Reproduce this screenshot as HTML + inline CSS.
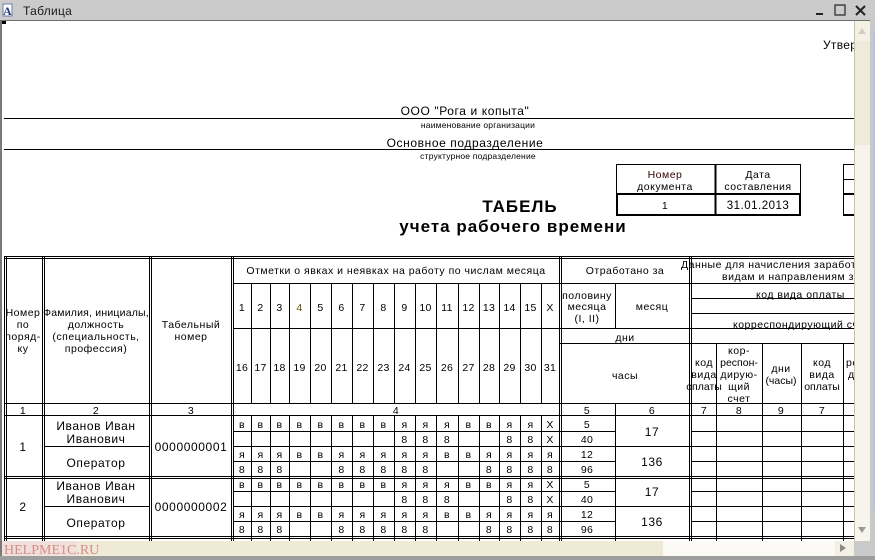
<!DOCTYPE html>
<html><head><meta charset="utf-8"><style>
html,body{margin:0;padding:0;width:875px;height:560px;overflow:hidden;background:#c9c9c9}
svg{display:block}
text{font-family:"Liberation Sans","DejaVu Sans",sans-serif;font-size:10.5px;fill:#000;letter-spacing:0.3px}
.c{text-anchor:middle}
.s{font-size:8.5px;letter-spacing:0.2px}
.b{font-weight:bold;font-size:17px;letter-spacing:1px}
.h{font-size:10.5px;letter-spacing:0.5px}
.p{font-size:12px;letter-spacing:0.6px}
</style></head><body>
<svg width="875" height="560" viewBox="0 0 875 560" xmlns="http://www.w3.org/2000/svg">
<rect x="0" y="0" width="875" height="21" fill="#cbcbcb"/>
<rect x="3" y="4" width="9" height="12" fill="#fff" stroke="#6a7fa8" stroke-width="1"/>
<text x="3" y="15" style="font-size:12px;font-family:'Liberation Serif',serif;fill:#2a3f80;font-weight:bold">A</text>
<text x="23" y="15" style="font-size:12px;fill:#1a1a1a">Таблица</text>
<rect x="816" y="13" width="7" height="2" fill="#222"/>
<rect x="835" y="5" width="10" height="10" fill="none" stroke="#222" stroke-width="1.2"/>
<path d="M856 6 L865 15 M865 6 L856 15" stroke="#222" stroke-width="2"/>
<rect x="1" y="20" width="854" height="521" fill="#fff"/>
<rect x="0" y="20" width="2" height="540" fill="#7a7a7a"/>
<rect x="0" y="20" width="875" height="1" fill="#6f6f6f"/>
<rect x="2" y="21" width="4" height="3" fill="#000"/>
<rect x="2" y="541" width="852" height="15" fill="#fbfaf6"/>
<rect x="2" y="541" width="661" height="15" fill="#efead6"/>
<rect x="835" y="541" width="19" height="15" fill="#f3f1e6"/>
<path d="M840 544 L846 548 L840 552 Z" fill="#8a8a8a"/>
<rect x="2" y="541" width="75" height="15" fill="#f0e0dc"/>
<text x="4" y="554" style="font-family:'Liberation Serif',serif;font-size:14px;fill:#d88a86;letter-spacing:0">HELPME1C.RU</text>
<rect x="0" y="556" width="875" height="4" fill="#9d9d9d"/>

<text x="823" y="49" style="font-size:12px">Утвер</text>
<line x1="4" y1="118.5" x2="855" y2="118.5" stroke="#000"/>
<text class="c p" x="465" y="115">ООО "Рога и копыта"</text>
<text class="c s" x="478" y="128">наименование организации</text>
<line x1="4" y1="149.5" x2="855" y2="149.5" stroke="#000"/>
<text class="c p" x="465" y="147">Основное подразделение</text>
<text class="c s" x="478" y="159">структурное подразделение</text>

<rect x="616.5" y="164.5" width="184" height="51" fill="none" stroke="#000"/>
<rect x="617" y="194" width="183" height="21" fill="none" stroke="#000" stroke-width="2"/>
<line x1="715.5" y1="164" x2="715.5" y2="216" stroke="#000" stroke-width="2"/>
<g class="h">
<text class="c h" x="665" y="178" style="fill:#300">Номер</text>
<text class="c h" x="665" y="190">документа</text>
<text class="c h" x="758" y="178">Дата</text>
<text class="c h" x="758" y="190">составления</text>
<text class="c h" x="665" y="209">1</text>
<text class="c h" x="758" y="209" style="font-size:11.5px">31.01.2013</text>
</g>
<path d="M843.5 164.5 H855 M843.5 179.5 H855 M843.5 164 V216" stroke="#000" fill="none"/>
<path d="M844 194 H855 M844 215 H855" stroke="#000" stroke-width="2"/>
<text class="c b" x="520" y="212">ТАБЕЛЬ</text>
<text class="c b" x="513" y="232">учета  рабочего времени</text>

<g stroke="#000" stroke-width="1" fill="none">
<path d="M4 256.5 H855 M4 258.5 H855"/>
<path d="M233 283.5 H855"/>
<path d="M692 298.5 H855 M692 313.5 H855"/>
<path d="M233 328.5 H855"/>
<path d="M560 343.5 H855"/>
<path d="M4 403.5 H855 M4 415.5 H855"/>
<path d="M233 431.5 H615 M692 431.5 H855 M44 446.5 H149 M233 446.5 H855 M233 461.5 H615 M692 461.5 H855"/>
<path d="M4 476.5 H855 M4 478.5 H855"/>
<path d="M233 491.5 H615 M692 491.5 H855 M44 506.5 H149 M233 506.5 H855 M233 521.5 H615 M692 521.5 H855"/>
<path d="M4 536.5 H855 M4 538.5 H855"/>
<path d="M4.5 256 V541 M6.5 256 V541 M42.5 256 V541 M44.5 256 V541 M149.5 256 V541 M151.5 256 V541 M231.5 256 V541 M233.5 256 V541"/>
<path d="M559.5 256 V541 M561.5 256 V541 M689.5 256 V541 M691.5 256 V541"/>
<path d="M251.5 283V403M270.5 283V403M289.5 283V403M310.5 283V403M331.5 283V403M352.5 283V403M373.5 283V403M394.5 283V403M415.5 283V403M436.5 283V403M458.5 283V403M479.5 283V403M499.5 283V403M520.5 283V403M541.5 283V403"/>
<path d="M251.5 416V541M270.5 416V541M289.5 416V541M310.5 416V541M331.5 416V541M352.5 416V541M373.5 416V541M394.5 416V541M415.5 416V541M436.5 416V541M458.5 416V541M479.5 416V541M499.5 416V541M520.5 416V541M541.5 416V541"/>
<path d="M615.5 283 V328 M615.5 403 V541"/>
<path d="M716.5 343V541 M762.5 343V541 M801.5 343V541 M843.5 343V541"/>
</g>

<g>
<text class="c h" x="23" y="316">Номер</text>
<text class="c h" x="23" y="328">по</text>
<text class="c h" x="23" y="340">поряд-</text>
<text class="c h" x="23" y="352">ку</text>
<text class="c h" x="96" y="316" style="letter-spacing:0.2px">Фамилия, инициалы,</text>
<text class="c h" x="96" y="328">должность</text>
<text class="c h" x="96" y="340">(специальность,</text>
<text class="c h" x="96" y="352">профессия)</text>
<text class="c h" x="191" y="328">Табельный</text>
<text class="c h" x="191" y="340">номер</text>
<text class="c h" x="396" y="274">Отметки о явках и неявках на работу по числам месяца</text>
<text class="c h" x="625" y="274">Отработано за</text>
<text class="c h" x="587" y="299">половину</text>
<text class="c h" x="587" y="310">месяца</text>
<text class="c h" x="587" y="322">(I, II)</text>
<text class="c h" x="652" y="310">месяц</text>
<text class="c h" x="625" y="341">дни</text>
<text class="c h" x="625" y="379">часы</text>
<text class="h" x="681" y="268">Данные для начисления заработно</text>
<text class="h" x="722" y="280">видам и направлениям за</text>
<text class="h" x="756" y="298">код вида оплаты</text>
<text class="h" x="733" y="328">корреспондирующий сч</text>
<text class="c h" x="704" y="366">код</text>
<text class="c h" x="704" y="378">вида</text>
<text class="c h" x="704" y="390" style="letter-spacing:0">оплаты</text>
<text class="c h" x="739" y="354">кор-</text>
<text class="c h" x="739" y="366" style="letter-spacing:0">респон-</text>
<text class="c h" x="739" y="378">дирую-</text>
<text class="c h" x="739" y="390">щий</text>
<text class="c h" x="739" y="402">счет</text>
<text class="c h" x="781" y="372">дни</text>
<text class="c h" x="781" y="384" style="letter-spacing:0">(часы)</text>
<text class="c h" x="822" y="366">код</text>
<text class="c h" x="822" y="378">вида</text>
<text class="c h" x="822" y="390" style="letter-spacing:0">оплаты</text>
<text class="h" x="846" y="366">ре</text>
<text class="h" x="848" y="378">д</text>
</g>
<g style="font-size:11px">
<text class="c" x="242" y="311">1</text><text class="c" x="260.5" y="311">2</text><text class="c" x="279.5" y="311">3</text><text class="c" x="299.5" y="311" style="fill:#6a4a00">4</text><text class="c" x="320.5" y="311">5</text><text class="c" x="341.5" y="311">6</text><text class="c" x="362.5" y="311">7</text><text class="c" x="383.5" y="311">8</text><text class="c" x="404.5" y="311">9</text><text class="c" x="425.5" y="311">10</text><text class="c" x="447" y="311">11</text><text class="c" x="468.5" y="311">12</text><text class="c" x="489" y="311">13</text><text class="c" x="509.5" y="311">14</text><text class="c" x="530.5" y="311">15</text><text class="c" x="550" y="311">X</text>
<text class="c" x="242" y="371">16</text><text class="c" x="260.5" y="371">17</text><text class="c" x="279.5" y="371">18</text><text class="c" x="299.5" y="371">19</text><text class="c" x="320.5" y="371">20</text><text class="c" x="341.5" y="371">21</text><text class="c" x="362.5" y="371">22</text><text class="c" x="383.5" y="371">23</text><text class="c" x="404.5" y="371">24</text><text class="c" x="425.5" y="371">25</text><text class="c" x="447" y="371">26</text><text class="c" x="468.5" y="371">27</text><text class="c" x="489" y="371">28</text><text class="c" x="509.5" y="371">29</text><text class="c" x="530.5" y="371">30</text><text class="c" x="550" y="371">31</text>
</g>
<g style="font-size:10.5px">
<text class="c" x="23" y="414">1</text><text class="c" x="96" y="414">2</text><text class="c" x="191" y="414">3</text><text class="c" x="396" y="414">4</text>
<text class="c" x="587" y="414">5</text><text class="c" x="652" y="414">6</text><text class="c" x="704" y="414">7</text><text class="c" x="739" y="414">8</text><text class="c" x="781" y="414">9</text><text class="c" x="822" y="414">7</text>
</g>

<g>
<text class="c p" x="23" y="451">1</text>
<text class="c p" x="96" y="430">Иванов Иван</text>
<text class="c p" x="96" y="443">Иванович</text>
<text class="c p" x="96" y="467">Оператор</text>
<text class="c p" x="191" y="451">0000000001</text>
<text class="c p" x="652" y="436">17</text>
<text class="c p" x="652" y="466">136</text>
<text class="c p" x="23" y="511">2</text>
<text class="c p" x="96" y="490">Иванов Иван</text>
<text class="c p" x="96" y="503">Иванович</text>
<text class="c p" x="96" y="527">Оператор</text>
<text class="c p" x="191" y="511">0000000002</text>
<text class="c p" x="652" y="496">17</text>
<text class="c p" x="652" y="526">136</text>
</g>
<g style="font-size:11.5px">
<text class="c" x="587" y="428">5</text><text class="c" x="587" y="443">40</text><text class="c" x="587" y="458">12</text><text class="c" x="587" y="473">96</text>
<text class="c" x="587" y="488">5</text><text class="c" x="587" y="503">40</text><text class="c" x="587" y="518">12</text><text class="c" x="587" y="533">96</text>
</g>
<g style="font-size:11px">
<text class="c" x="242" y="428">в</text><text class="c" x="260.5" y="428">в</text><text class="c" x="279.5" y="428">в</text><text class="c" x="299.5" y="428">в</text><text class="c" x="320.5" y="428">в</text><text class="c" x="341.5" y="428">в</text><text class="c" x="362.5" y="428">в</text><text class="c" x="383.5" y="428">в</text><text class="c" x="404.5" y="428">я</text><text class="c" x="425.5" y="428">я</text><text class="c" x="447" y="428">я</text><text class="c" x="468.5" y="428">в</text><text class="c" x="489" y="428">в</text><text class="c" x="509.5" y="428">я</text><text class="c" x="530.5" y="428">я</text><text class="c" x="550" y="428">X</text>
<text class="c" x="404.5" y="443">8</text><text class="c" x="425.5" y="443">8</text><text class="c" x="447" y="443">8</text><text class="c" x="509.5" y="443">8</text><text class="c" x="530.5" y="443">8</text><text class="c" x="550" y="443">X</text>
<text class="c" x="242" y="458">я</text><text class="c" x="260.5" y="458">я</text><text class="c" x="279.5" y="458">я</text><text class="c" x="299.5" y="458">в</text><text class="c" x="320.5" y="458">в</text><text class="c" x="341.5" y="458">я</text><text class="c" x="362.5" y="458">я</text><text class="c" x="383.5" y="458">я</text><text class="c" x="404.5" y="458">я</text><text class="c" x="425.5" y="458">я</text><text class="c" x="447" y="458">в</text><text class="c" x="468.5" y="458">в</text><text class="c" x="489" y="458">я</text><text class="c" x="509.5" y="458">я</text><text class="c" x="530.5" y="458">я</text><text class="c" x="550" y="458">я</text>
<text class="c" x="242" y="473">8</text><text class="c" x="260.5" y="473">8</text><text class="c" x="279.5" y="473">8</text><text class="c" x="341.5" y="473">8</text><text class="c" x="362.5" y="473">8</text><text class="c" x="383.5" y="473">8</text><text class="c" x="404.5" y="473">8</text><text class="c" x="425.5" y="473">8</text><text class="c" x="489" y="473">8</text><text class="c" x="509.5" y="473">8</text><text class="c" x="530.5" y="473">8</text><text class="c" x="550" y="473">8</text>
<text class="c" x="242" y="488">в</text><text class="c" x="260.5" y="488">в</text><text class="c" x="279.5" y="488">в</text><text class="c" x="299.5" y="488">в</text><text class="c" x="320.5" y="488">в</text><text class="c" x="341.5" y="488">в</text><text class="c" x="362.5" y="488">в</text><text class="c" x="383.5" y="488">в</text><text class="c" x="404.5" y="488">я</text><text class="c" x="425.5" y="488">я</text><text class="c" x="447" y="488">я</text><text class="c" x="468.5" y="488">в</text><text class="c" x="489" y="488">в</text><text class="c" x="509.5" y="488">я</text><text class="c" x="530.5" y="488">я</text><text class="c" x="550" y="488">X</text>
<text class="c" x="404.5" y="503">8</text><text class="c" x="425.5" y="503">8</text><text class="c" x="447" y="503">8</text><text class="c" x="509.5" y="503">8</text><text class="c" x="530.5" y="503">8</text><text class="c" x="550" y="503">X</text>
<text class="c" x="242" y="518">я</text><text class="c" x="260.5" y="518">я</text><text class="c" x="279.5" y="518">я</text><text class="c" x="299.5" y="518">в</text><text class="c" x="320.5" y="518">в</text><text class="c" x="341.5" y="518">я</text><text class="c" x="362.5" y="518">я</text><text class="c" x="383.5" y="518">я</text><text class="c" x="404.5" y="518">я</text><text class="c" x="425.5" y="518">я</text><text class="c" x="447" y="518">в</text><text class="c" x="468.5" y="518">в</text><text class="c" x="489" y="518">я</text><text class="c" x="509.5" y="518">я</text><text class="c" x="530.5" y="518">я</text><text class="c" x="550" y="518">я</text>
<text class="c" x="242" y="533">8</text><text class="c" x="260.5" y="533">8</text><text class="c" x="279.5" y="533">8</text><text class="c" x="341.5" y="533">8</text><text class="c" x="362.5" y="533">8</text><text class="c" x="383.5" y="533">8</text><text class="c" x="404.5" y="533">8</text><text class="c" x="425.5" y="533">8</text><text class="c" x="489" y="533">8</text><text class="c" x="509.5" y="533">8</text><text class="c" x="530.5" y="533">8</text><text class="c" x="550" y="533">8</text>
</g>
<rect x="855" y="21" width="15" height="520" fill="#f6f4ec"/>
<rect x="854" y="21" width="1" height="520" fill="#c8c3a8"/>
<rect x="855" y="21" width="15" height="20" fill="#f3f1e6"/>
<path d="M858 34 L862 28 L866 34 Z" fill="#d0cdc0"/>
<rect x="855" y="41" width="15" height="104" fill="#efebda"/>
<path d="M858 527 L866 527 L862 533 Z" fill="#9a9a9a"/>
<rect x="870" y="20" width="5" height="540" fill="#c9c9c9"/>
<rect x="873" y="30" width="2" height="480" fill="#b8c4e4"/>
<rect x="0" y="556" width="875" height="4" fill="#9d9d9d"/>
</svg>
</body></html>
